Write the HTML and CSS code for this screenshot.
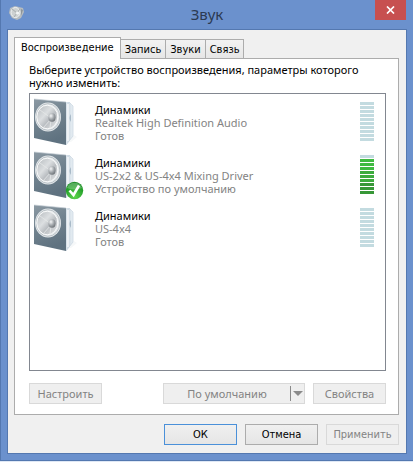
FILE: index.html
```html
<!DOCTYPE html>
<html lang="ru">
<head>
    <meta charset="UTF-8">
    <meta name="viewport" content="width=device-width, initial-scale=1.0">
    <title>Звук</title>
    <link rel="stylesheet" href="styles.css">
</head>
<body>
    <!-- Общие значки -->
    <svg class="sprite" width="0" height="0" aria-hidden="true">
        <defs>
            <linearGradient id="face" x1="0" y1="0" x2="0.3" y2="1">
                <stop offset="0" stop-color="#8b99a3"/>
                <stop offset="0.45" stop-color="#738490"/>
                <stop offset="1" stop-color="#5f7280"/>
            </linearGradient>
            <linearGradient id="side" x1="0" y1="0" x2="1" y2="0">
                <stop offset="0" stop-color="#e3ebf1"/>
                <stop offset="0.5" stop-color="#d0dbe4"/>
                <stop offset="1" stop-color="#eaf1f6"/>
            </linearGradient>
            <linearGradient id="cone" x1="0" y1="0" x2="1" y2="1">
                <stop offset="0" stop-color="#b4b9bd"/>
                <stop offset="0.4" stop-color="#dcdfe1"/>
                <stop offset="0.6" stop-color="#b9bdc1"/>
                <stop offset="1" stop-color="#e6e8e9"/>
            </linearGradient>
            <radialGradient id="dome" cx="0.35" cy="0.3" r="0.8">
                <stop offset="0" stop-color="#f5f6f7"/>
                <stop offset="0.5" stop-color="#a5aaae"/>
                <stop offset="1" stop-color="#666b70"/>
            </radialGradient>
            <radialGradient id="ok" cx="0.5" cy="0.85" r="0.9">
                <stop offset="0" stop-color="#5fd64c"/>
                <stop offset="0.6" stop-color="#27a32c"/>
                <stop offset="1" stop-color="#168322"/>
            </radialGradient>
            <symbol id="speaker" viewBox="0 0 52 50">
                <path d="M37 45 L42 38 L45 40 L39 45 Z" fill="#f6f8f9"/>
                <path d="M32 5 L37 5 Q40 8 41 9 L41 39 L34 48 Z" fill="url(#side)"/>
                <path d="M36 7 L36 44" stroke="#fff" stroke-width="1.2"/>
                <path d="M39 17 Q36 21 39 25 Z" fill="#a9bac8"/>
                <path d="M37 5 Q40 8 41 9 L41 39 L34 48" fill="none" stroke="#c6d3de" stroke-width="0.7"/>
                <path d="M2 2 L34 5 L34 48 L2 41 Z" fill="url(#face)"/>
                <path d="M2 2 L34 5" fill="none" stroke="#c5cfd6" stroke-width="0.7"/>
                <ellipse cx="16" cy="20" rx="13" ry="14.5" fill="#e4e8eb"/>
                <ellipse cx="16" cy="20" rx="11.8" ry="13.3" fill="none" stroke="#aeb7bd" stroke-width="0.8"/>
                <ellipse cx="15.3" cy="20" rx="10.5" ry="11.8" fill="url(#cone)" stroke="#fafbfb"/>
                <path d="M19 21 L8 13 M19 22 L11 31 M19 23 L18 31" stroke="#e6e8e9" stroke-width="0.8"/>
                <ellipse cx="20" cy="20.5" rx="3.6" ry="4.2" fill="url(#dome)"/>
            </symbol>
        </defs>
    </svg>

    <div class="window">
        <header class="titlebar">
            <svg class="titlebar-icon" viewBox="0 0 16 16" aria-hidden="true">
                <path d="M1 3 L6 1 L14 3 L15 7 L12 13 L8 15 L3 13 L0 8 Z" fill="#b6bcc0"/>
                <ellipse cx="6.5" cy="7.5" rx="4.5" ry="5" fill="#cdd1d1" stroke="#f1f4f5"/>
                <path d="M3 4 L8 8 L5 12 M8 8 L11 4" stroke="#a8adae" fill="none"/>
                <circle cx="8.5" cy="8" r="1.6" fill="#f3f5f5"/>
                <path d="M12 4 L14 5 L12 11 Z" fill="#8d959b"/>
            </svg>
            <h1>Звук</h1>
            <button type="button" class="close-btn" aria-label="Закрыть">
                <svg viewBox="0 0 9 8" aria-hidden="true">
                    <path d="M1 0.5 L8 7.5 M8 0.5 L1 7.5" stroke="#fff" stroke-width="1.7"/>
                </svg>
            </button>
        </header>

        <main class="client">
            <div class="tabs" role="tablist">
                <button type="button" class="tab active" role="tab" aria-selected="true">Воспроизведение</button>
                <button type="button" class="tab" role="tab" aria-selected="false">Запись</button>
                <button type="button" class="tab" role="tab" aria-selected="false">Звуки</button>
                <button type="button" class="tab" role="tab" aria-selected="false">Связь</button>
            </div>

            <section class="panel" role="tabpanel">
                <p class="hint">Выберите устройство воспроизведения, параметры которого нужно изменить:</p>

                <ul class="devices">
                    <li class="device">
                        <svg class="device-icon" aria-hidden="true"><use href="#speaker"/></svg>
                        <div class="device-text">
                            <strong>Динамики</strong>
                            <span>Realtek High Definition Audio</span>
                            <span>Готов</span>
                        </div>
                        <div class="level">
                            <i></i><i></i><i></i><i></i><i></i><i></i><i></i><i></i><i></i><i></i>
                        </div>
                    </li>
                    <li class="device">
                        <svg class="device-icon" viewBox="0 0 52 50" aria-hidden="true">
                            <use href="#speaker" width="52" height="50"/>
                            <circle cx="42.5" cy="40.5" r="8.7" fill="url(#ok)"/>
                            <path d="M35 38 A8 8 0 0 1 50 38 Q43 41 35 38 Z" fill="#fff" opacity="0.25"/>
                            <path d="M37.5 40.5 L41.5 45 L47 35.5" fill="none" stroke="#fff" stroke-width="2.6"/>
                        </svg>
                        <div class="device-text">
                            <strong>Динамики</strong>
                            <span>US-2x2 &amp; US-4x4 Mixing Driver</span>
                            <span>Устройство по умолчанию</span>
                        </div>
                        <div class="level playing">
                            <i></i><i></i><i></i><i></i><i></i><i></i><i></i><i></i><i></i><i></i>
                        </div>
                    </li>
                    <li class="device">
                        <svg class="device-icon" aria-hidden="true"><use href="#speaker"/></svg>
                        <div class="device-text">
                            <strong>Динамики</strong>
                            <span>US-4x4</span>
                            <span>Готов</span>
                        </div>
                        <div class="level">
                            <i></i><i></i><i></i><i></i><i></i><i></i><i></i><i></i><i></i><i></i>
                        </div>
                    </li>
                </ul>

                <div class="device-actions">
                    <button type="button" class="btn" disabled>Настроить</button>
                    <button type="button" class="btn split" disabled>
                        <span class="split-label">По умолчанию</span>
                        <span class="split-arrow"></span>
                    </button>
                    <button type="button" class="btn" disabled>Свойства</button>
                </div>
            </section>

            <footer class="dialog-actions">
                <button type="button" class="btn default">ОК</button>
                <button type="button" class="btn">Отмена</button>
                <button type="button" class="btn" disabled>Применить</button>
            </footer>
        </main>
    </div>
</body>
</html>
```

FILE: styles.css
```css
:root {
    --frame: #6b91cd;
    --frame-dark: #5478b0;
    --client: #f0f0f0;
    --line: #acacac;
    --list-line: #828790;
    --muted: #838383;
    --dialog-font: "DejaVu Sans Condensed", "DejaVu Sans", sans-serif;
}

* {
    box-sizing: border-box;
}

body {
    margin: 0;
    min-height: 100vh;
    display: flex;
    flex-direction: column;
    padding-bottom: 1px;
    background-color: #dfe8f5;
    font-family: "Noto Sans", "Open Sans", sans-serif;
    font-size: 11px;
    line-height: 13px;
    color: #000;
}

button {
    font: inherit;
    color: inherit;
    padding: 0;
}

.sprite {
    position: absolute;
}

.window {
    flex: 1;
    display: flex;
    flex-direction: column;
    padding: 0 6px 6px;
    background-color: var(--frame);
    border: 1px solid var(--frame-dark);
    border-top: none;
    border-right: none;
}

/* Заголовок */
.titlebar {
    display: grid;
    grid-template-columns: 32px 1fr 32px;
    align-items: start;
    height: 29px;
}

.titlebar-icon {
    width: 16px;
    height: 16px;
    margin: 5px 0 0 2px;
}

.titlebar h1 {
    margin: 0;
    text-align: center;
    font-size: 15px;
    line-height: 29px;
    font-weight: 400;
    color: #2b3a52;
}

.close-btn {
    height: 20px;
    width: 31px;
    border: none;
    background-color: #c75050;
    display: flex;
    align-items: center;
    justify-content: center;
}

.close-btn svg {
    width: 9px;
    height: 8px;
}

.client {
    flex: 1;
    display: flex;
    flex-direction: column;
    padding: 7px 7px 8px 6px;
    background-color: var(--client);
    border: 1px solid var(--frame-dark);
}

/* Вкладки */
.tabs {
    display: flex;
    align-items: flex-end;
    font-family: var(--dialog-font);
}

.tab {
    height: 19px;
    padding: 0 4px;
    margin-left: -1px;
    border: 1px solid var(--line);
    border-bottom: none;
    background: linear-gradient(#f2f2f2, #e6e6e6);
}

.tab.active {
    height: 22px;
    padding: 0 6px 2px;
    margin: 0 0 -1px;
    background: #fff;
    z-index: 1;
}

.panel {
    flex: 1;
    display: flex;
    flex-direction: column;
    padding: 4px 12px 10px 14px;
    background-color: #fff;
    border: 1px solid var(--line);
}

.hint {
    margin: 0 0 4px;
}

/* Список устройств */
.devices {
    flex: 1;
    margin: 0;
    padding: 3px 11px 0 2px;
    list-style: none;
    border: 1px solid var(--list-line);
}

.device {
    display: flex;
    gap: 11px;
    height: 53px;
}

.device-icon {
    width: 52px;
    height: 50px;
}

.device-text {
    flex: 1;
    display: flex;
    flex-direction: column;
    padding-top: 6px;
    color: var(--muted);
}

.device-text strong {
    font-weight: 400;
    color: #000;
}

.level {
    display: flex;
    flex-direction: column;
    gap: 1px;
    width: 14px;
    padding-top: 5px;
}

.level i {
    height: 3px;
    background-color: #c3dbe0;
}

.level.playing i:nth-child(n+2) {
    background-color: #3fba40;
}

.level.playing i:nth-child(n+5) {
    background-color: #3dab3e;
}

.level.playing i:nth-child(n+8) {
    background-color: #379737;
}

/* Кнопки */
.btn {
    width: 73px;
    height: 21px;
    border: 1px solid var(--line);
    background: linear-gradient(#f0f0f0, #e5e5e5);
}

.btn.default {
    border-color: #4a90d9;
}

.btn:disabled {
    color: var(--muted);
    background: #efefef;
    border-color: #d9d9d9;
}

.btn.split {
    width: 142px;
    margin-left: auto;
    margin-right: 8px;
    display: flex;
    align-items: center;
}

.split-label {
    flex: 1;
}

.split-arrow {
    height: 15px;
    width: 14px;
    border-left: 1px solid #8a8a8a;
    display: flex;
    align-items: center;
    justify-content: center;
}

.split-arrow::before {
    content: "";
    border: 5px solid transparent;
    border-top-color: #8a8a8a;
    border-bottom: none;
}

.device-actions {
    display: flex;
    margin-top: 12px;
}

.dialog-actions {
    display: flex;
    justify-content: flex-end;
    gap: 8px;
    margin-top: 9px;
    font-family: var(--dialog-font);
}
```
